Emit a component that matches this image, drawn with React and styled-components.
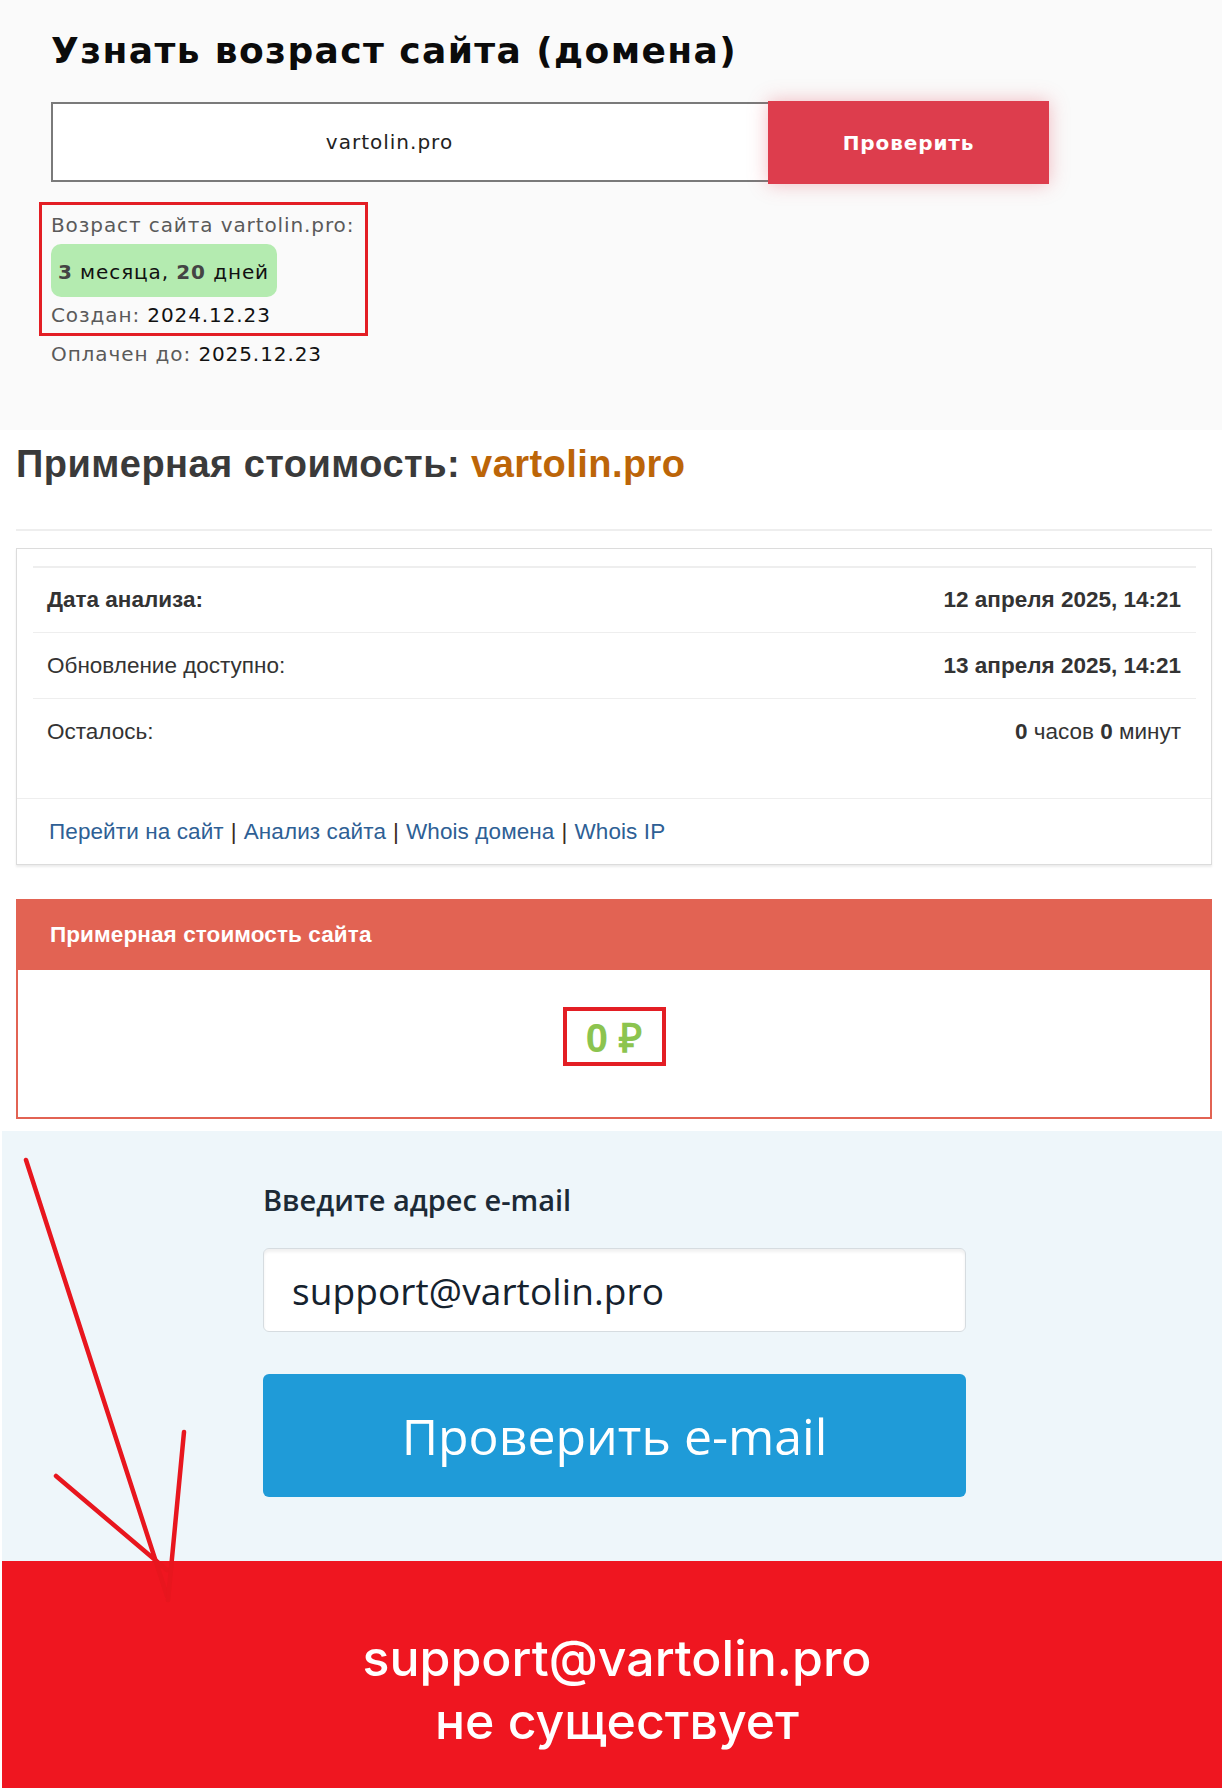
import React from 'react';
import styled, { createGlobalStyle } from 'styled-components';

const Global = createGlobalStyle`
    html, body {
        margin: 0;
        padding: 0;
        background: #fff;
    }
    * { box-sizing: border-box; }
`

const Page = styled.div`
    position: relative;
    width: 1222px;
    overflow: hidden;
`

// -- age check block --
const AgeSection = styled.section`
    background: #fafafa;
    height: 430px;
    padding: 29px 0 0 51px;
    font-family: "DejaVu Sans", "Noto Sans", sans-serif;
`

const AgeTitle = styled.h1`
    margin: 0;
    font-size: 36px;
    line-height: 44px;
    font-weight: 700;
    color: #0b0b0b;
    letter-spacing: 1.4px;
`

const CheckForm = styled.div`
    display: flex;
    margin-top: 28px;
    align-items: flex-start;
`

const DomainInput = styled.div`
    width: 717px;
    height: 80px;
    margin-top: 1px;
    border: 2px solid #7a7a7a;
    border-right: none;
    background: #fff;
    display: flex;
    align-items: center;
    justify-content: center;
    font-size: 20px;
    letter-spacing: 1px;
    color: #222;
    padding-right: 42px;
`

const CheckButton = styled.div`
    width: 281px;
    height: 83px;
    background: #dd3d4d;
    color: #fff;
    font-weight: 700;
    font-size: 20px;
    letter-spacing: 0.9px;
    display: flex;
    align-items: center;
    justify-content: center;
    box-shadow: 0 0 18px rgba(226, 70, 86, 0.35);
`

const Marked = styled.div`
    width: 329px;
    margin: 18px 0 0 -12px;
    padding: 7px 0 4px 9px;
    border: 3px solid #e31e24;
`

const InfoLine = styled.div`
    font-size: 20px;
    line-height: 27px;
    letter-spacing: 0.9px;
    color: #5a5a5a;
    white-space: nowrap;
    b {
        font-weight: 400;
        color: #111;
    }
`

const AgeBadge = styled.div`
    display: inline-flex;
    align-items: center;
    height: 53px;
    margin: 5px 0 5px;
    padding: 2px 8px 0 7px;
    border-radius: 10px;
    background: #b4ebb0;
    font-size: 20px;
    letter-spacing: 0.9px;
    color: #111;
    white-space: pre;
    strong {
        font-weight: 700;
        color: #444;
    }
`

const PaidLine = styled(InfoLine)`
    margin-top: 5px;
`

// -- cost block --
const CostSection = styled.section`
    padding: 12px 10px 0 16px;
    font-family: "Liberation Sans", Arial, sans-serif;
`

const CostTitle = styled.h2`
    margin: 0;
    font-size: 38px;
    line-height: 44px;
    font-weight: 700;
    color: #3a3a3a;
    letter-spacing: 0.45px;
    span {
        color: #bc6508;
    }
`

const Divider = styled.hr`
    margin: 43px 0 0;
    border: none;
    border-top: 2px solid #eeeeee;
`

const Card = styled.div`
    margin-top: 17px;
    border: 1px solid #dcdcdc;
    box-shadow: 0 2px 2px rgba(0, 0, 0, 0.08);
    background: #fff;
`

const CardBody = styled.div`
    padding: 17px 15px 34px 16px;
`

const Row = styled.div`
    display: flex;
    justify-content: space-between;
    align-items: center;
    height: 66px;
    padding: 0 15px 0 14px;
    border-top: ${p => p.strong ? '2px' : '1px'} solid #eeeeee;
    font-size: 22.5px;
    color: #333;
    font-weight: ${p => p.strong ? 700 : 400};
`

const RowValue = styled.div`
    font-weight: 700;
    color: #333;
    span {
        font-weight: 400;
    }
`

const CardFooter = styled.div`
    height: 66px;
    border-top: 1px solid #eeeeee;
    display: flex;
    align-items: center;
    padding-left: 32px;
    font-size: 22.5px;
    letter-spacing: 0.1px;
    color: #3a2a20;
`

const Link = styled.a`
    color: #2e5f95;
    text-decoration: none;
`

const Sep = styled.span`
    margin: 0 7px;
`

const Panel = styled.div`
    margin-top: 34px;
    border: 2px solid #e26353;
    border-top: none;
`

const PanelHead = styled.div`
    height: 71px;
    background: #e26353;
    color: #fff;
    font-weight: 700;
    font-size: 22.5px;
    display: flex;
    align-items: center;
    padding-left: 32px;
    letter-spacing: 0.1px;
`

const PanelBody = styled.div`
    height: 147px;
    display: flex;
    justify-content: center;
    align-items: flex-start;
    padding-top: 37px;
`

const Price = styled.div`
    width: 103px;
    height: 59px;
    border: 4px solid #e31e24;
    display: flex;
    align-items: center;
    justify-content: center;
    color: #8cc44f;
    font-weight: 700;
    font-size: 40px;
`

// -- email check block --
const EmailSection = styled.section`
    margin: 12px 0 0 2px;
    background: #eef6fa;
    height: 430px;
    padding: 51px 0 0 261px;
    font-family: "Open Sans", "Noto Sans", sans-serif;
`

const EmailLabel = styled.div`
    font-size: 29px;
    line-height: 36px;
    font-weight: 600;
    color: #1c2a36;
`

const EmailInput = styled.div`
    width: 703px;
    height: 84px;
    margin-top: 30px;
    border: 1px solid #d6dce0;
    border-radius: 6px;
    background: #fff;
    box-shadow: inset 0 3px 3px rgba(0, 0, 0, 0.06);
    display: flex;
    align-items: center;
    padding-left: 28px;
    font-size: 37px;
    font-weight: 500;
    color: #15222e;
    letter-spacing: 0.1px;
`

const EmailButton = styled.div`
    width: 703px;
    height: 123px;
    margin-top: 42px;
    border-radius: 6px;
    background: #1f9bd8;
    color: #fff;
    font-size: 50px;
    font-weight: 500;
    display: flex;
    align-items: center;
    justify-content: center;
`

const ResultBand = styled.div`
    margin-left: 2px;
    height: 227px;
    background: #ef1620;
    color: #fff;
    font-family: Inter, "Open Sans", sans-serif;
    font-size: 50px;
    font-weight: 500;
    line-height: 63px;
    text-align: center;
    padding-top: 66px;
    padding-left: 10px;
`

const Arrow = styled.svg`
    position: absolute;
    left: 0;
    top: 0;
    pointer-events: none;
`

export default function App() {
    return (
        <Page>
            <Global />
            <AgeSection>
                <AgeTitle>Узнать возраст сайта (домена)</AgeTitle>
                <CheckForm>
                    <DomainInput>vartolin.pro</DomainInput>
                    <CheckButton>Проверить</CheckButton>
                </CheckForm>
                <Marked>
                    <InfoLine>Возраст сайта vartolin.pro:</InfoLine>
                    <AgeBadge><strong>3</strong> месяца, <strong>20</strong> дней</AgeBadge>
                    <InfoLine>Создан: <b>2024.12.23</b></InfoLine>
                </Marked>
                <PaidLine>Оплачен до: <b>2025.12.23</b></PaidLine>
            </AgeSection>

            <CostSection>
                <CostTitle>Примерная стоимость: <span>vartolin.pro</span></CostTitle>
                <Divider />
                <Card>
                    <CardBody>
                        <Row strong>
                            <div>Дата анализа:</div>
                            <RowValue>12 апреля 2025, 14:21</RowValue>
                        </Row>
                        <Row>
                            <div>Обновление доступно:</div>
                            <RowValue>13 апреля 2025, 14:21</RowValue>
                        </Row>
                        <Row>
                            <div>Осталось:</div>
                            <RowValue>0 <span>часов</span> 0 <span>минут</span></RowValue>
                        </Row>
                    </CardBody>
                    <CardFooter>
                        <Link href="#">Перейти на сайт</Link><Sep>|</Sep>
                        <Link href="#">Анализ сайта</Link><Sep>|</Sep>
                        <Link href="#">Whois домена</Link><Sep>|</Sep>
                        <Link href="#">Whois IP</Link>
                    </CardFooter>
                </Card>
                <Panel>
                    <PanelHead>Примерная стоимость сайта</PanelHead>
                    <PanelBody>
                        <Price>0 ₽</Price>
                    </PanelBody>
                </Panel>
            </CostSection>

            <EmailSection>
                <EmailLabel>Введите адрес e-mail</EmailLabel>
                <EmailInput>support@vartolin.pro</EmailInput>
                <EmailButton>Проверить e-mail</EmailButton>
            </EmailSection>
            <ResultBand>
                support@vartolin.pro<br />
                не существует
            </ResultBand>

            <Arrow width="1222" height="1790" viewBox="0 0 1222 1790">
                <g stroke="#e8161e" strokeWidth="4.5" strokeLinecap="round" fill="none">
                    <path d="M26 1160 L167 1596" />
                    <path d="M56 1476 L167 1570" />
                    <path d="M184 1432 L168 1600" />
                </g>
            </Arrow>
        </Page>
    );
}
